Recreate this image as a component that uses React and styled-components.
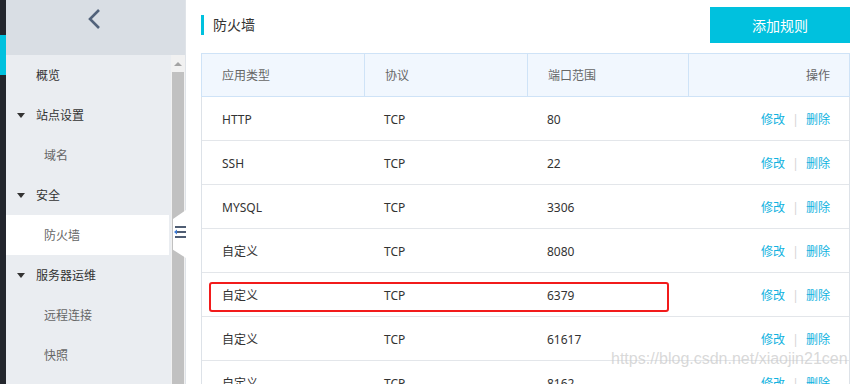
import styled, { createGlobalStyle } from 'styled-components';

const GlobalStyle = createGlobalStyle`
  html, body {
    margin: 0;
    padding: 0;
    height: 384px;
    overflow: hidden;
    background: #fff;
    font-family: "Noto Sans", "Noto Sans CJK SC", sans-serif;
    font-size: 12px;
    color: #333;
  }
  * { box-sizing: border-box; }
`;

const menu = [
  { label: '概览', level: 1 },
  { label: '站点设置', level: 1, group: true },
  { label: '域名', level: 2 },
  { label: '安全', level: 1, group: true },
  { label: '防火墙', level: 2, active: true },
  { label: '服务器运维', level: 1, group: true },
  { label: '远程连接', level: 2 },
  { label: '快照', level: 2 },
];

const rules = [
  ['HTTP', 'TCP', '80'],
  ['SSH', 'TCP', '22'],
  ['MYSQL', 'TCP', '3306'],
  ['自定义', 'TCP', '8080'],
  ['自定义', 'TCP', '6379'],
  ['自定义', 'TCP', '61617'],
  ['自定义', 'TCP', '8162'],
];

const App = () => {
  return (
    <Page>
      <GlobalStyle />
      <Rail>
        <RailMark />
      </Rail>
      <Sidebar>
        <SideHeader>
          <svg width="16" height="22" viewBox="0 0 16 22">
            <path d="M13 2 L4 11 L13 20" fill="none" stroke="#52627a" strokeWidth="2.6" />
          </svg>
        </SideHeader>
        <SideBody>
          <MenuList>
            {menu.map((m) => (
              <MenuItem key={m.label} $level={m.level} $active={m.active}>
                {m.group && <Caret />}
                {m.label}
              </MenuItem>
            ))}
          </MenuList>
          <ScrollTrack>
            <ScrollArrow />
            <ScrollThumb />
          </ScrollTrack>
        </SideBody>
        <CollapseTab>
          <svg width="12" height="14" viewBox="0 0 12 14">
            <rect x="1" y="1" width="11" height="2" fill="#4f5d73" />
            <rect x="3" y="6" width="9" height="2" fill="#4f5d73" />
            <path d="M0 7 L3 4.5 L3 9.5 Z" fill="#3d7bd6" />
            <rect x="1" y="11" width="11" height="2" fill="#4f5d73" />
          </svg>
        </CollapseTab>
      </Sidebar>
      <Main>
        <TopBar>
          <Title>防火墙</Title>
          <AddButton>添加规则</AddButton>
        </TopBar>
        <Table>
          <HeadRow>
            <HeadCell>应用类型</HeadCell>
            <HeadCell>协议</HeadCell>
            <HeadCell>端口范围</HeadCell>
            <HeadCell $right>操作</HeadCell>
          </HeadRow>
          {rules.map((r, i) => (
            <Row key={i}>
              <Cell>{r[0]}</Cell>
              <Cell>{r[1]}</Cell>
              <Cell>{r[2]}</Cell>
              <Cell $right>
                <Link>修改</Link>
                <Sep>|</Sep>
                <Link>删除</Link>
              </Cell>
            </Row>
          ))}
          <Highlight />
        </Table>
      </Main>
      <Watermark>https://blog.csdn.net/xiaojin21cen</Watermark>
    </Page>
  );
};
export default App;

const Page = styled.div`
  position: relative;
  display: flex;
  width: 854px;
  height: 384px;
  overflow: hidden;
`;

const Rail = styled.div`
  width: 6px;
  flex-shrink: 0;
  background: #23262d;
  padding-top: 35px;
`;

const RailMark = styled.div`
  height: 40px;
  background: #00c1de;
`;

const Sidebar = styled.aside`
  position: relative;
  width: 180px;
  flex-shrink: 0;
  display: flex;
  flex-direction: column;
  border-right: 1px solid #dfe3e8;
`;

const SideHeader = styled.div`
  height: 55px;
  flex-shrink: 0;
  background: #d9dee4;
  display: flex;
  justify-content: center;
  padding-top: 8px;
  padding-right: 4px;
`;

const SideBody = styled.div`
  flex: 1;
  display: flex;
  background: #eaedf1;
`;

const MenuList = styled.ul`
  list-style: none;
  margin: 0;
  padding: 0;
  width: 165px;
`;

const MenuItem = styled.li`
  position: relative;
  height: 40px;
  line-height: 40px;
  padding-top: 1px;
  margin-right: 2px;
  padding-left: ${(p) => (p.$level === 1 ? '30px' : '38px')};
  color: ${(p) => (p.$level === 1 ? '#333' : '#666')};
  background: ${(p) => (p.$active ? '#fff' : 'transparent')};
`;

const Caret = styled.span`
  position: absolute;
  left: 11px;
  top: 18px;
  width: 0;
  height: 0;
  border-left: 4px solid transparent;
  border-right: 4px solid transparent;
  border-top: 5px solid #333;
`;

const ScrollTrack = styled.div`
  width: 14px;
  display: flex;
  flex-direction: column;
  background: #f1f1f1;
`;

const ScrollArrow = styled.div`
  height: 17px;
  display: flex;
  align-items: center;
  justify-content: center;
  &::before {
    content: '';
    border-left: 4px solid transparent;
    border-right: 4px solid transparent;
    border-bottom: 4px solid #a3a3a3;
  }
`;

const ScrollThumb = styled.div`
  flex: 1;
  margin: 0 1px 0 1px;
  background: #c1c1c1;
`;

const CollapseTab = styled.div`
  position: absolute;
  left: 167px;
  top: 210px;
  width: 13px;
  height: 48px;
  background: #fff;
  clip-path: polygon(0 19%, 100% 0, 100% 100%, 0 83%);
  display: flex;
  align-items: center;
  justify-content: flex-end;
  padding-bottom: 4px;
`;

const Main = styled.main`
  flex: 1;
  padding: 0 4px 0 15px;
  display: flex;
  flex-direction: column;
`;

const TopBar = styled.div`
  height: 53px;
  flex-shrink: 0;
  display: flex;
  align-items: flex-start;
  justify-content: space-between;
`;

const Title = styled.h1`
  margin: 15px 0 0;
  height: 20px;
  line-height: 20px;
  padding-left: 9px;
  border-left: 3px solid #00c1de;
  font-size: 14px;
  font-weight: normal;
  color: #333;
`;

const AddButton = styled.button`
  margin-top: 7px;
  width: 140px;
  height: 36px;
  border: none;
  background: #00c1de;
  color: #fff;
  font-family: inherit;
  font-size: 14px;
`;

const Table = styled.div`
  position: relative;
  flex-shrink: 0;
  width: 649px;
  border-left: 1px solid #dde2e8;
  border-right: 1px solid #dde2e8;
`;

const HeadRow = styled.div`
  display: grid;
  grid-template-columns: 162px 163px 161px 1fr;
  height: 44px;
  background: #f1f7fe;
  border: 1px solid #cfe3f7;
  margin: 0 -1px;
`;

const HeadCell = styled.div`
  line-height: 42px;
  padding: 1px 19px 0 20px;
  color: #666;
  text-align: ${(p) => (p.$right ? 'right' : 'left')};
  & + & {
    border-left: 1px solid #cfe3f7;
  }
`;

const Row = styled.div`
  display: grid;
  grid-template-columns: 162px 163px 161px 1fr;
  height: 44px;
  flex-shrink: 0;
  border-bottom: 1px solid #e3e6ea;
`;

const Cell = styled.div`
  line-height: 43px;
  padding: 1px 19px 0 20px;
  color: #333;
  text-align: ${(p) => (p.$right ? 'right' : 'left')};
`;

const Link = styled.span`
  color: #0fb2e0;
`;

const Sep = styled.span`
  display: inline-block;
  width: 21px;
  text-align: center;
  color: #d4d4d4;
`;

const Highlight = styled.div`
  position: absolute;
  left: 7px;
  top: 229px;
  width: 460px;
  height: 30px;
  border: 2px solid #f21b1b;
  border-radius: 3px;
`;

const Watermark = styled.div`
  position: absolute;
  left: 611px;
  top: 350px;
  font-family: "Liberation Sans", sans-serif;
  font-size: 16px;
  color: rgba(200, 200, 200, 0.7);
  white-space: nowrap;
`;
